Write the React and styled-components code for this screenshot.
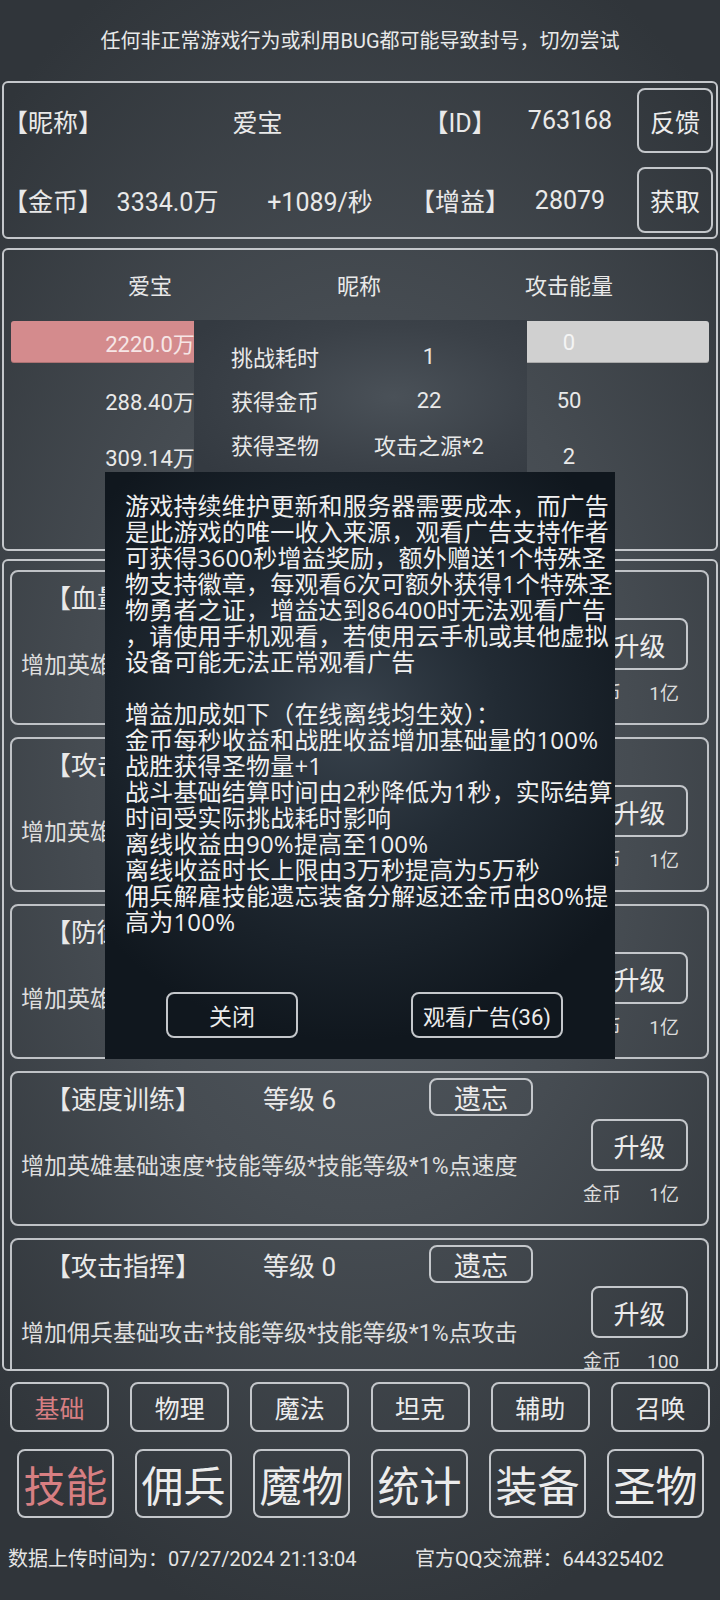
import React from "react";
import styled, { createGlobalStyle } from "styled-components";

const GlobalStyle = createGlobalStyle`
  html, body {
    margin: 0;
    padding: 0;
    background: #30353a;
  }
  body {
    font-family: Roboto, "Noto Sans CJK SC", sans-serif;
    color: #e9e9e9;
  }
  * {
    box-sizing: border-box;
  }
`;

const Screen = styled.div`
  position: relative;
  width: 720px;
  height: 1600px;
  overflow: hidden;
  display: flex;
  flex-direction: column;
  background: radial-gradient(
    ellipse 75% 55% at 50% 48%,
    #555c63 0%,
    #464c52 50%,
    #30353a 100%
  );
`;

const Notice = styled.div`
  height: 81px;
  padding-bottom: 3px;
  display: flex;
  align-items: center;
  justify-content: center;
  font-size: 20px;
`;

const Panel = styled.div`
  margin: 0 2px;
  border: 2px solid #c4c7cb;
  border-radius: 6px;
`;

// account info
const InfoPanel = styled(Panel)`
  height: 158px;
  padding: 5px 3px 4px 6px;
  display: grid;
  grid-template-columns: 95px 125px 180px 100px 120px 83px;
  grid-template-rows: 65px 66px;
  row-gap: 14px;
  align-items: center;
  font-size: 25px;
`;

const Label = styled.span`
  margin-left: -7px;
  white-space: nowrap;
`;

const Cell = styled.span`
  text-align: center;
  white-space: nowrap;
  grid-column: ${(p) => p.span || "auto"};
`;

const BoxButton = styled.div`
  justify-self: end;
  width: ${(p) => p.w || 76}px;
  height: ${(p) => p.h || 65}px;
  border: 2px solid #c4c7cb;
  border-radius: 8px;
  display: flex;
  align-items: center;
  justify-content: center;
  font-size: ${(p) => p.size || 25}px;
  color: ${(p) => (p.active ? "#d77f82" : "#ececec")};
  white-space: nowrap;
`;

// battle panel
const BattlePanel = styled(Panel)`
  margin-top: 9px;
  height: 303px;
  padding: 0 7px;
  display: flex;
  flex-direction: column;
  font-size: 22px;
`;

const BattleRow = styled.div`
  display: grid;
  grid-template-columns: 278px 140px 280px;
  height: ${(p) => p.h}px;
  margin-top: ${(p) => p.mt || 0}px;
  align-items: center;
  text-align: center;
`;

const Bar = styled.div`
  height: 100%;
  display: flex;
  align-items: center;
  justify-content: center;
  border-radius: 3px;
  background: ${(p) => p.bg};
  box-shadow: inset 0 -1px 0 rgba(0, 0, 0, 0.18);
  color: ${(p) => p.fg};
`;

// skills
const SkillPanel = styled(Panel)`
  margin-top: 8px;
  height: 812px;
  padding: 9px 7px 0 6px;
  overflow: hidden;
  display: flex;
  flex-direction: column;
  gap: 12px;
`;

const SkillCard = styled.div`
  flex-shrink: 0;
  height: 155px;
  border: 2px solid #bfc2c6;
  border-radius: 8px;
  padding-top: 5px;
`;

const SkillHead = styled.div`
  display: grid;
  grid-template-columns: 218px 166px 104px;
  height: 38px;
  padding-left: 33px;
  align-items: center;
  font-size: 26px;
`;

const SkillBody = styled.div`
  display: flex;
  justify-content: space-between;
  padding-right: 19px;
`;

const SkillDesc = styled.div`
  margin-top: 36px;
  padding-left: 9px;
  font-size: 23px;
  line-height: 30px;
  color: #dedede;
  white-space: nowrap;
`;

const SkillSide = styled.div`
  width: 110px;
  display: flex;
  flex-direction: column;
  align-items: flex-end;
  padding-top: 3px;
`;

const Price = styled.div`
  margin-top: 12px;
  width: 110px;
  padding: 0 9px 0 5px;
  display: flex;
  justify-content: space-between;
  font-size: 19px;
  line-height: 24px;
  color: #dcdcdc;
`;

// bottom tabs
const TabRow = styled.div`
  display: flex;
  gap: ${(p) => p.gap}px;
  padding-left: ${(p) => p.pl}px;
  margin-top: ${(p) => p.mt}px;
`;

const Footer = styled.div`
  margin-top: 26px;
  display: flex;
  font-size: 20px;
  line-height: 30px;
  color: #e4e4e4;
  padding-left: 8px;
`;

const FooterItem = styled.span`
  width: ${(p) => p.w}px;
  white-space: nowrap;
`;

// overlays
const ResultTip = styled.div`
  position: absolute;
  left: 194px;
  top: 320px;
  width: 333px;
  height: 170px;
  padding-top: 14px;
  background: radial-gradient(
    ellipse 70% 70% at 60% 45%,
    #4a5158 0%,
    #3b4148 60%,
    #343a41 100%
  );
  font-size: 22px;
`;

const TipRow = styled.div`
  display: grid;
  grid-template-columns: 162px 146px;
  height: 44px;
  align-items: center;
  text-align: center;
  white-space: nowrap;
`;

const Dialog = styled.div`
  position: absolute;
  left: 105px;
  top: 472px;
  width: 510px;
  height: 587px;
  display: flex;
  flex-direction: column;
  padding: 21px 0 21px 20px;
  background: radial-gradient(
    ellipse 65% 55% at 48% 42%,
    #39434d 0%,
    #222b34 45%,
    #10171e 100%
  );
  font-family: "Open Sans", "Noto Sans CJK SC", sans-serif;
`;

const DialogText = styled.div`
  font-size: 24px;
  line-height: 26px;
  color: #f0f0f0;
  letter-spacing: 0.2px;
`;

const Line = styled.div`
  white-space: nowrap;
  height: 26px;
`;

const DialogActions = styled.div`
  margin-top: auto;
  display: flex;
  justify-content: space-between;
  padding: 0 52px 0 41px;
`;

const DialogButton = styled.div`
  width: ${(p) => p.w}px;
  height: 46px;
  border: 2px solid #c4c7cb;
  border-radius: 8px;
  display: flex;
  align-items: center;
  justify-content: center;
  font-family: Roboto, "Noto Sans CJK SC", sans-serif;
  font-size: ${(p) => p.size}px;
  color: #ececec;
  white-space: nowrap;
`;

const battleRows = [
  ["288.40万", "", "50"],
  ["309.14万", "", "2"],
  ["314.52万", "", "3"],
];

const skills = [
  { name: "血量训练", level: 5, desc: "增加英雄基础血量*技能等级*技能等级*1%点血量", cost: "1亿" },
  { name: "攻击训练", level: 5, desc: "增加英雄基础攻击*技能等级*技能等级*1%点攻击", cost: "1亿" },
  { name: "防御训练", level: 5, desc: "增加英雄基础防御*技能等级*技能等级*1%点防御", cost: "1亿" },
  { name: "速度训练", level: 6, desc: "增加英雄基础速度*技能等级*技能等级*1%点速度", cost: "1亿" },
  { name: "攻击指挥", level: 0, desc: "增加佣兵基础攻击*技能等级*技能等级*1%点攻击", cost: "100" },
];

const subTabs = ["基础", "物理", "魔法", "坦克", "辅助", "召唤"];
const mainTabs = ["技能", "佣兵", "魔物", "统计", "装备", "圣物"];

const adLines = [
  "游戏持续维护更新和服务器需要成本，而广告",
  "是此游戏的唯一收入来源，观看广告支持作者",
  "可获得3600秒增益奖励，额外赠送1个特殊圣",
  "物支持徽章，每观看6次可额外获得1个特殊圣",
  "物勇者之证，增益达到86400时无法观看广告",
  "，请使用手机观看，若使用云手机或其他虚拟",
  "设备可能无法正常观看广告",
  "",
  "增益加成如下（在线离线均生效）：",
  "金币每秒收益和战胜收益增加基础量的100%",
  "战胜获得圣物量+1",
  "战斗基础结算时间由2秒降低为1秒，实际结算",
  "时间受实际挑战耗时影响",
  "离线收益由90%提高至100%",
  "离线收益时长上限由3万秒提高为5万秒",
  "佣兵解雇技能遗忘装备分解返还金币由80%提",
  "高为100%",
];

export default function App() {
  return (
    <Screen>
      <GlobalStyle />
      <Notice>任何非正常游戏行为或利用BUG都可能导致封号，切勿尝试</Notice>

      <InfoPanel>
        <Label>【昵称】</Label>
        <Cell span="2 / 4">爱宝</Cell>
        <Cell>【ID】</Cell>
        <Cell>763168</Cell>
        <BoxButton>反馈</BoxButton>

        <Label>【金币】</Label>
        <Cell>3334.0万</Cell>
        <Cell>+1089/秒</Cell>
        <Cell>【增益】</Cell>
        <Cell>28079</Cell>
        <BoxButton h={66}>获取</BoxButton>
      </InfoPanel>

      <BattlePanel>
        <BattleRow h={68}>
          <span>爱宝</span>
          <span>昵称</span>
          <span>攻击能量</span>
        </BattleRow>
        <BattleRow h={42} mt={3}>
          <Bar bg="#d48b8d" fg="#f6e6e6">2220.0万</Bar>
          <span />
          <Bar bg="#d0d0d0" fg="#f4f4f4">0</Bar>
        </BattleRow>
        {battleRows.map((r, i) => (
          <BattleRow key={i} h={56} mt={i === 0 ? 9 : 0}>
            <span>{r[0]}</span>
            <span>{r[1]}</span>
            <span>{r[2]}</span>
          </BattleRow>
        ))}
      </BattlePanel>

      <SkillPanel>
        {skills.map((s) => (
          <SkillCard key={s.name}>
            <SkillHead>
              <span>【{s.name}】</span>
              <span>等级 {s.level}</span>
              <BoxButton w={104} h={38} size={27}>遗忘</BoxButton>
            </SkillHead>
            <SkillBody>
              <SkillDesc>{s.desc}</SkillDesc>
              <SkillSide>
                <BoxButton w={97} h={52} size={26}>升级</BoxButton>
                <Price>
                  <span>金币</span>
                  <span>{s.cost}</span>
                </Price>
              </SkillSide>
            </SkillBody>
          </SkillCard>
        ))}
      </SkillPanel>

      <TabRow gap={21.2} pl={10} mt={11}>
        {subTabs.map((t, i) => (
          <BoxButton key={t} w={99} h={50} size={25} active={i === 0}>
            {t}
          </BoxButton>
        ))}
      </TabRow>

      <TabRow gap={21} pl={17} mt={17}>
        {mainTabs.map((t, i) => (
          <BoxButton key={t} w={97} h={69} size={42} active={i === 0}>
            {t}
          </BoxButton>
        ))}
      </TabRow>

      <Footer>
        <FooterItem w={407}>数据上传时间为：07/27/2024 21:13:04</FooterItem>
        <FooterItem>官方QQ交流群：644325402</FooterItem>
      </Footer>

      <ResultTip>
        <TipRow>
          <span>挑战耗时</span>
          <span>1</span>
        </TipRow>
        <TipRow>
          <span>获得金币</span>
          <span>22</span>
        </TipRow>
        <TipRow>
          <span>获得圣物</span>
          <span>攻击之源*2</span>
        </TipRow>
      </ResultTip>

      <Dialog>
        <DialogText>
          {adLines.map((l, i) => (
            <Line key={i}>{l}</Line>
          ))}
        </DialogText>
        <DialogActions>
          <DialogButton w={132} size={23}>关闭</DialogButton>
          <DialogButton w={152} size={22}>观看广告(36)</DialogButton>
        </DialogActions>
      </Dialog>
    </Screen>
  );
}
